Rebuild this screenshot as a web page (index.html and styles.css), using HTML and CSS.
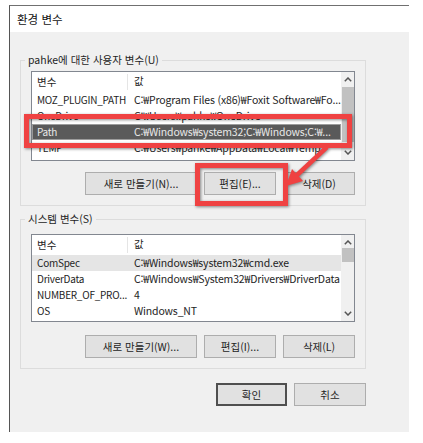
FILE: index.html
```html
<!DOCTYPE html>
<html lang="ko">
<head>
<meta charset="utf-8">
<title>환경 변수</title>
<link rel="stylesheet" href="styles.css">
</head>
<body>
<div class="window">
  <div class="titlebar">환경 변수</div>
  <div class="content">
    <fieldset class="group user">
      <legend>pahke에 대한 사용자 변수(U)</legend>
      <div class="list list-user">
        <div class="list-main">
          <div class="row head"><span class="c1">변수</span><span class="c2">값</span></div>
          <div class="row"><span class="c1">MOZ_PLUGIN_PATH</span><span class="c2">C:₩Program Files (x86)₩Foxit Software₩Fo...</span></div>
          <div class="row"><span class="c1">OneDrive</span><span class="c2">C:₩Users₩pahke₩OneDrive</span></div>
          <div class="row selected"><span class="c1">Path</span><span class="c2">C:₩Windows₩system32;C:₩Windows;C:₩...</span></div>
          <div class="row"><span class="c1">TEMP</span><span class="c2">C:₩Users₩pahke₩AppData₩Local₩Temp</span></div>
        </div>
        <div class="scroll">
          <div class="sarrow"><svg width="8" height="5" viewBox="0 0 8 5"><polyline points="0.8,4.2 4,1 7.2,4.2" fill="none" stroke="#555" stroke-width="1.5"/></svg></div>
          <div class="track"><div class="thumb thumb-user"></div></div>
          <div class="sarrow"><svg width="8" height="5" viewBox="0 0 8 5"><polyline points="0.8,0.8 4,4 7.2,0.8" fill="none" stroke="#555" stroke-width="1.5"/></svg></div>
        </div>
      </div>
      <div class="btns">
        <button class="btn wide">새로 만들기(N)...</button>
        <button class="btn">편집(E)...</button>
        <button class="btn">삭제(D)</button>
      </div>
    </fieldset>

    <fieldset class="group sys">
      <legend>시스템 변수(S)</legend>
      <div class="list list-sys">
        <div class="list-main">
          <div class="row head"><span class="c1">변수</span><span class="c2">값</span></div>
          <div class="row hover"><span class="c1">ComSpec</span><span class="c2">C:₩Windows₩system32₩cmd.exe</span></div>
          <div class="row"><span class="c1">DriverData</span><span class="c2">C:₩Windows₩System32₩Drivers₩DriverData</span></div>
          <div class="row"><span class="c1">NUMBER_OF_PRO...</span><span class="c2">4</span></div>
          <div class="row"><span class="c1">OS</span><span class="c2">Windows_NT</span></div>
        </div>
        <div class="scroll">
          <div class="sarrow"><svg width="8" height="5" viewBox="0 0 8 5"><polyline points="0.8,4.2 4,1 7.2,4.2" fill="none" stroke="#555" stroke-width="1.5"/></svg></div>
          <div class="track"><div class="thumb thumb-sys"></div></div>
          <div class="sarrow"><svg width="8" height="5" viewBox="0 0 8 5"><polyline points="0.8,0.8 4,4 7.2,0.8" fill="none" stroke="#555" stroke-width="1.5"/></svg></div>
        </div>
      </div>
      <div class="btns">
        <button class="btn wide">새로 만들기(W)...</button>
        <button class="btn">편집(I)...</button>
        <button class="btn">삭제(L)</button>
      </div>
    </fieldset>

    <div class="dialog-btns">
      <button class="btn default">확인</button>
      <button class="btn">취소</button>
    </div>
  </div>
</div>

<svg class="annot" width="423" height="443" viewBox="0 0 423 443">
  <rect x="26.5" y="116.5" width="323" height="29" fill="none" stroke="#ef4242" stroke-width="5"/>
  <rect x="197.5" y="165.5" width="88" height="38" fill="none" stroke="#ef4242" stroke-width="5"/>
  <line x1="327" y1="147" x2="296" y2="176" stroke="#ef4242" stroke-width="4.5"/>
  <polygon points="286,186 292,169 303,181" fill="#ef4242"/>
</svg>
</body>
</html>
```

FILE: styles.css
```css
html, body {
  margin: 0;
  padding: 0;
  background: #ffffff;
}

body {
  font-family: "Noto Sans CJK KR", "Noto Sans", sans-serif;
  font-size: 10.5px;
  color: #1e1e1e;
  width: 423px;
  height: 443px;
  overflow: hidden;
  position: relative;
}

.window {
  margin: 5px 0 0 9px;
  width: 400px;
  border-left: 1px solid #555555;
  border-top: 1px solid #707070;
  box-sizing: border-box;
}

.titlebar {
  height: 26px;
  line-height: 26px;
  padding-left: 7px;
  font-size: 11.5px;
  background: #ffffff;
  color: #111;
}

.content {
  background: #f0f0f0;
  height: 400px;
  padding: 20px 0 0 10px;
  box-sizing: border-box;
}

.group {
  margin: 0;
  width: 346px;
  box-sizing: border-box;
  border: 1px solid #dcdcdc;
  padding: 3px 10px 10px 10px;
  min-inline-size: 0;
}

.group legend {
  padding: 0 3px;
  margin-left: -6px;
  line-height: 16px;
  font-size: 10.5px;
}

.group.sys {
  margin-top: 5px;
  padding-top: 7px;
}

.list {
  display: flex;
  border: 1px solid #828790;
  background: #ffffff;
  box-sizing: border-box;
  overflow: hidden;
}

.list-user { height: 90px; }
.list-sys { height: 88px; }

.list-main {
  flex: 1;
  min-width: 0;
  overflow: hidden;
}

.row {
  display: flex;
  height: 16px;
  line-height: 16px;
  white-space: nowrap;
  letter-spacing: -0.15px;
}

.row.head {
  height: 20px;
  line-height: 18px;
}

.row .c1 {
  width: 96px;
  flex: none;
  padding-left: 5px;
  box-sizing: border-box;
  overflow: hidden;
  font-size: 10px;
  letter-spacing: -0.25px;
}

.row.head .c1 {
  border-right: 1px solid #e5e5e5;
  margin: 2px 0;
  line-height: 16px;
  font-size: 10.5px;
  letter-spacing: 0;
}

.row.head .c2 {
  line-height: 18px;
}

.row .c2 {
  padding-left: 6px;
  overflow: hidden;
  flex: 1;
  min-width: 0;
}

.row.selected {
  background: #5a5a5a;
  color: #e8e8e8;
  outline: 1px solid #9c9c9c;
  outline-offset: -1px;
}

.row.hover {
  background: #e5e5e5;
}

.scroll {
  width: 13px;
  flex: none;
  background: #f0f0f0;
  display: flex;
  flex-direction: column;
}

.sarrow {
  height: 15px;
  display: flex;
  align-items: center;
  justify-content: center;
  flex: none;
}

.track {
  flex: 1;
}

.thumb {
  background: #c1c1c1;
  margin: 0 0 0 1px;
}

.thumb-user { height: 55px; }
.thumb-sys { height: 14px; margin-top: -2px; }

.btns {
  display: flex;
  justify-content: flex-end;
  gap: 7px;
  margin-top: 11px;
}

.group.sys .btns {
  margin-top: 13px;
}

.btn {
  font-family: "Noto Sans CJK KR", "Noto Sans", sans-serif;
  font-size: 10.5px;
  color: #1e1e1e;
  width: 72px;
  height: 23px;
  line-height: 19px;
  padding: 0;
  background: #e1e1e1;
  border: 1px solid #adadad;
  box-sizing: border-box;
  border-radius: 0;
}

.btn.wide {
  width: 112px;
}

.btn.default {
  border: 2px solid #4f4f4f;
  width: 71px;
}

.dialog-btns {
  display: flex;
  justify-content: flex-end;
  gap: 7px;
  width: 346px;
  margin-top: 14px;
}

.annot {
  position: absolute;
  left: 0;
  top: 0;
  pointer-events: none;
  filter: drop-shadow(1px 1px 1.5px rgba(0, 0, 0, 0.45));
}
```
